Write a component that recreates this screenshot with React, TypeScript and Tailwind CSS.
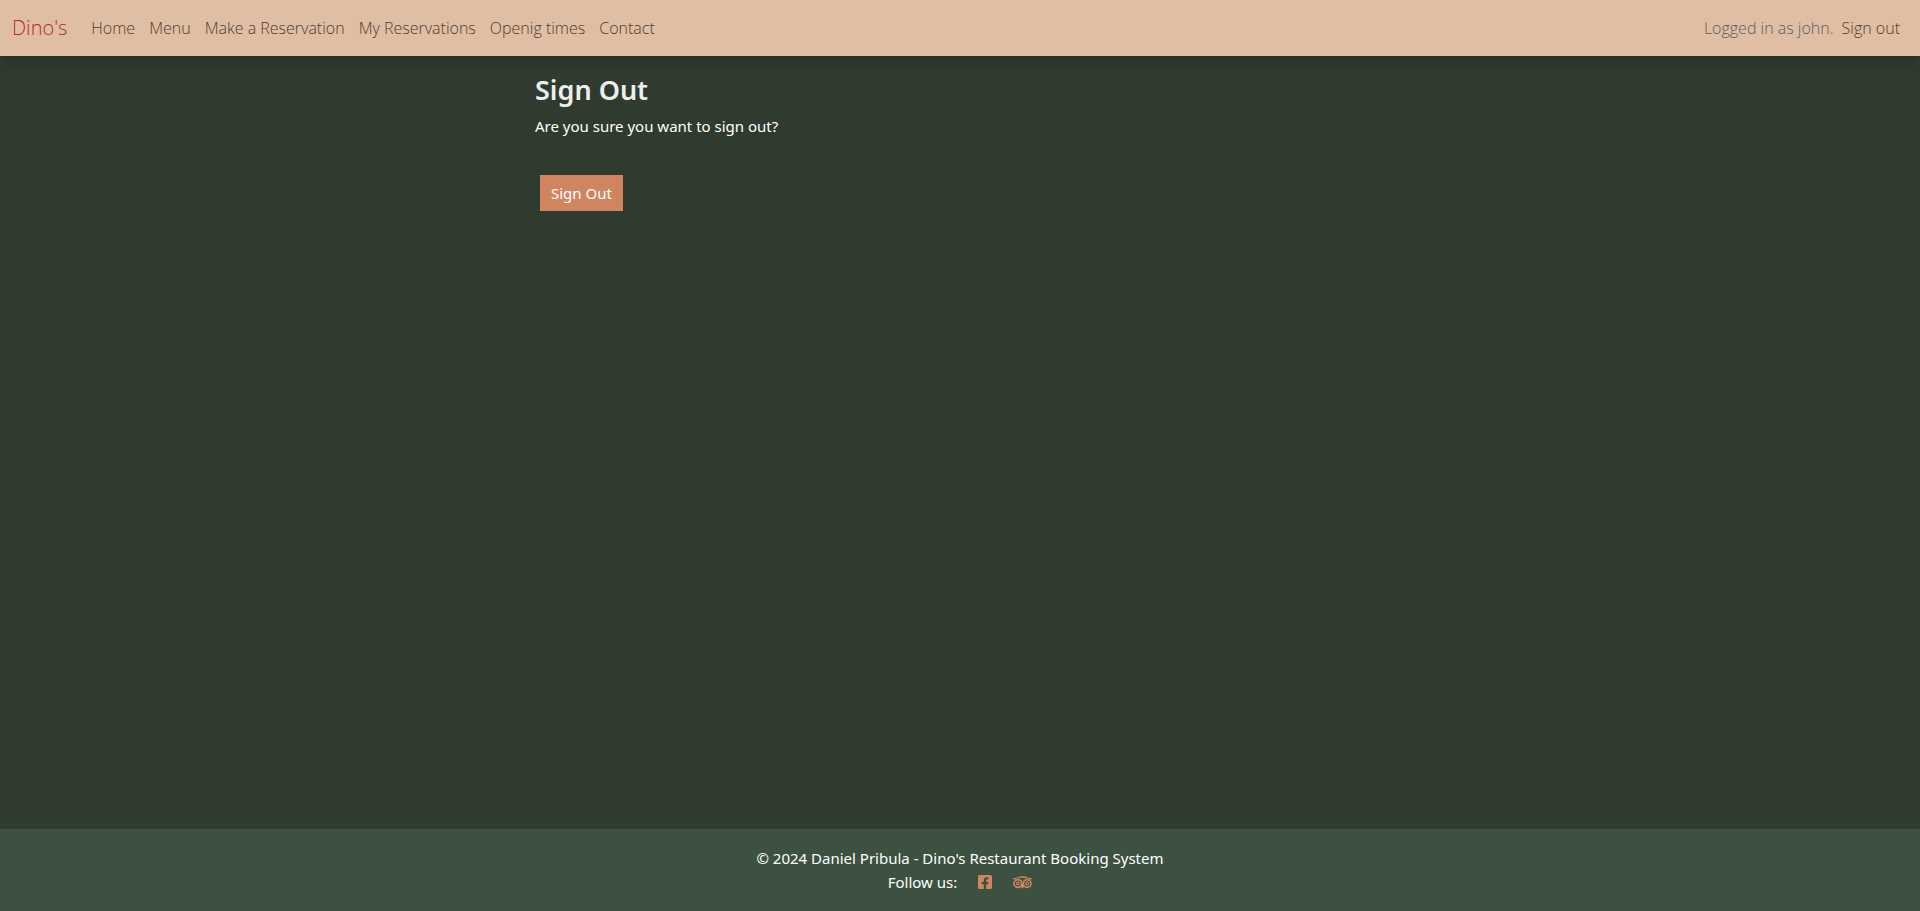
import { FaFacebookSquare } from "react-icons/fa";

const links = [
  "Home",
  "Menu",
  "Make a Reservation",
  "My Reservations",
  "Openig times",
  "Contact",
];

function OwlIcon() {
  return (
    <svg viewBox="0 0 576 400" className="h-[13px] w-[19px]" fill="currentColor" aria-hidden="true">
      <path
        fillRule="evenodd"
        d="M144 90a142 142 0 1 0 96 247l48 55 48-55a142 142 0 1 0 96-247A142 142 0 0 0 288 222A142 142 0 0 0 144 90ZM144 140a92 92 0 1 1 0 184a92 92 0 1 1 0-184ZM432 140a92 92 0 1 1 0 184a92 92 0 1 1 0-184Z"
      />
      <circle cx="144" cy="232" r="42" fill="none" stroke="currentColor" strokeWidth="34" />
      <circle cx="432" cy="232" r="42" fill="none" stroke="currentColor" strokeWidth="34" />
      <path d="M0 64h96C150 26 216 8 288 8s138 18 192 56h96c-16 22-27 44-32 66C500 86 400 54 288 54S76 86 32 130C27 108 16 86 0 64Z" />
    </svg>
  );
}

export default function App() {
  return (
    <div className="flex min-h-screen flex-col bg-[#2f3b2f] font-['Segoe_UI','Noto_Sans',sans-serif] text-[15px] leading-6 text-white">
      <header className="flex h-14 items-center bg-[#e0bea4] px-3 font-['Segoe_UI','Open_Sans',sans-serif] text-base font-light text-[#4d3d32] shadow-[0_4px_10px_rgba(0,0,0,0.2)]">
        <a href="#home" className="mr-4 text-xl leading-8 text-[#b92b20]">
          Dino's
        </a>
        <nav className="flex grow gap-[14px] px-2">
          {links.map((label) => (
            <a key={label} href="#" className="py-2">
              {label}
            </a>
          ))}
        </nav>
        <span className="text-[#55606a]">Logged in as john.</span>
        <a href="#signout" className="px-2 py-2">
          Sign out
        </a>
      </header>
      <main className="mx-auto w-full max-w-[874px] grow px-3 pt-[18px]">
        <h1 className="mb-2 text-[27px] font-semibold leading-8 text-[#eeeeee]">Sign Out</h1>
        <p>Are you sure you want to sign out?</p>
        <form className="mt-[37px] px-[5px]" onSubmit={(e) => e.preventDefault()}>
          <button type="submit" className="h-9 bg-[#d1855f] px-[11px]">
            Sign Out
          </button>
        </form>
      </main>
      <footer className="bg-[#3d5140] py-[17px] text-center">
        <p>© 2024 Daniel Pribula - Dino's Restaurant Booking System</p>
        <div className="flex items-center justify-center text-[#d1855f]">
          <span className="mr-5 text-white">Follow us:</span>
          <a href="#facebook" aria-label="Facebook" className="mr-5">
            <FaFacebookSquare size={16} />
          </a>
          <a href="#tripadvisor" aria-label="Tripadvisor">
            <OwlIcon />
          </a>
        </div>
      </footer>
    </div>
  );
}
